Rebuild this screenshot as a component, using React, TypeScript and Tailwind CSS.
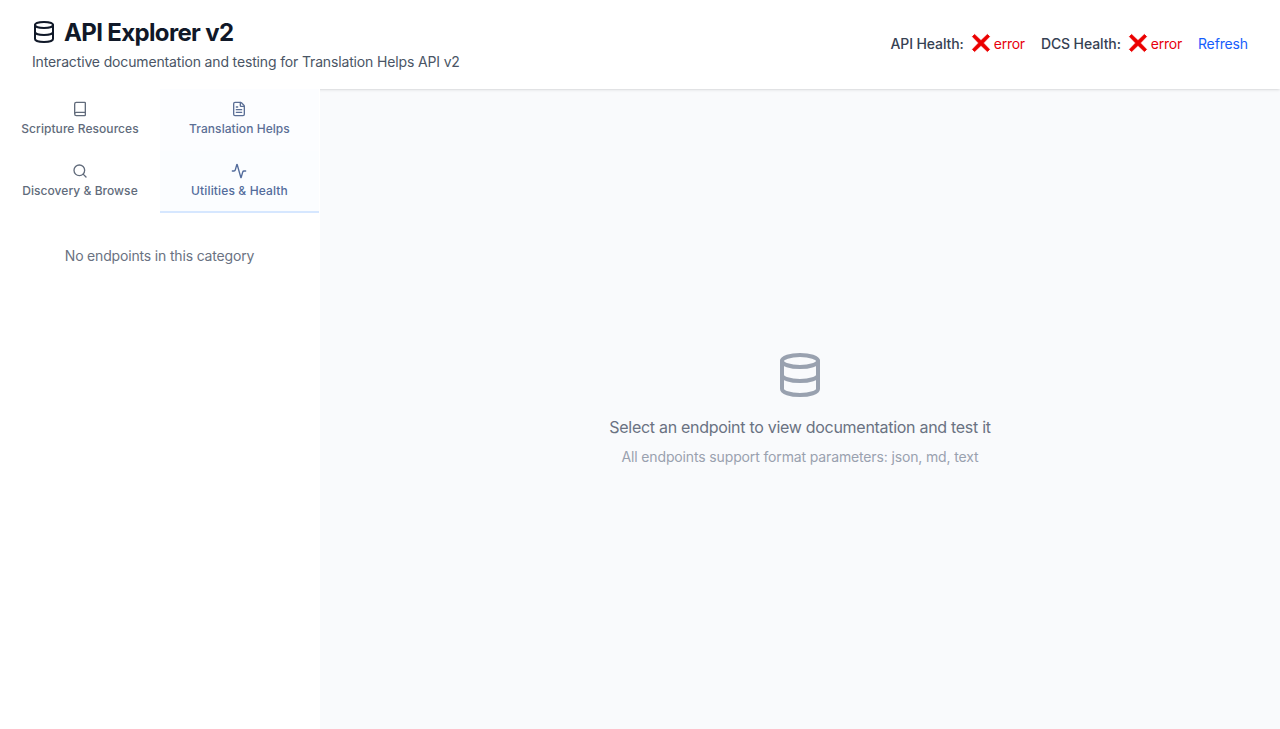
import { Activity, Book, Database, FileText, Search, type LucideIcon } from 'lucide-react';

type Category = { label: string; icon: LucideIcon; className: string; iconClassName: string };

const categories: Category[] = [
  {
    label: 'Scripture Resources',
    icon: Book,
    className: 'border-transparent text-[#616b7b] tracking-[0.06px]',
    iconClassName: 'size-4',
  },
  {
    label: 'Translation Helps',
    icon: FileText,
    className: 'border-transparent bg-[#fcfdff] text-[#5b6f96] tracking-[0.06px]',
    iconClassName: 'mr-px size-4',
  },
  {
    label: 'Discovery & Browse',
    icon: Search,
    className: 'border-transparent text-[#616b7b] tracking-[0.05px]',
    iconClassName: 'size-4',
  },
  {
    label: 'Utilities & Health',
    icon: Activity,
    className: 'border-[#d6e7ff] bg-[#fbfdff] text-[#536c9c] tracking-[0.14px]',
    iconClassName: 'mr-px size-4',
  },
];

function Cross() {
  return (
    <svg className="-mt-0.5 size-5" viewBox="0 0 20 20">
      <path
        d="M3.6 1.4 10 7.6 16.4 1.4 18.6 3.6 12.4 10 18.6 16.4 16.4 18.6 10 12.4 3.6 18.6 1.4 16.4 7.6 10 1.4 3.6Z"
        fill="#eb0000"
        stroke="#eb0000"
        strokeWidth="0.8"
        strokeLinejoin="round"
      />
    </svg>
  );
}

function Health({ label }: { label: string }) {
  return (
    <div className="flex items-center">
      <span className="font-medium tracking-[-0.1px] text-[#364153]">{label}</span>
      <span className="ml-[7px] flex items-center gap-[3px] tracking-[-0.25px] text-[#e7000b]">
        <Cross />
        error
      </span>
    </div>
  );
}

export default function App() {
  return (
    <div className="flex h-screen flex-col bg-[#f9fafc] font-['Inter',sans-serif]">
      <header className="flex h-[89px] shrink-0 items-center justify-between bg-white px-8 pb-px shadow-sm">
        <div>
          <h1 className="flex h-8 items-center gap-2 text-2xl font-bold tracking-[-0.65px] text-[#101828]">
            <Database className="size-6" />
            <span className="pt-0.5">API Explorer v2</span>
          </h1>
          <p className="mt-1 text-sm tracking-[-0.15px] text-[#4a5565]">
            Interactive documentation and testing for Translation Helps API v2
          </p>
        </div>
        <div className="flex items-center gap-4 text-sm">
          <Health label="API Health:" />
          <Health label="DCS Health:" />
          <button className="tracking-[-0.14px] text-[#155dfc]">Refresh</button>
        </div>
      </header>
      <div className="flex flex-1">
        <aside className="w-80 border-r border-white bg-white">
          <nav className="grid grid-cols-[160px_159px]">
            {categories.map(({ label, icon: Icon, className, iconClassName }) => (
              <button
                key={label}
                className={'flex h-[62px] flex-col items-center gap-1 border-b-2 pt-3 text-xs font-medium ' + className}
              >
                <Icon className={iconClassName} />
                {label}
              </button>
            ))}
          </nav>
          <p className="mt-[33px] text-center text-sm tracking-[-0.17px] text-[#6a7282]">No endpoints in this category</p>
        </aside>
        <main className="flex flex-1 flex-col items-center justify-center text-center">
          <Database className="mb-4 size-12 text-[#99a1af]" />
          <p className="text-base tracking-[-0.29px] text-[#6a7282]">Select an endpoint to view documentation and test it</p>
          <p className="mt-2 text-sm tracking-[-0.14px] text-[#99a1af]">All endpoints support format parameters: json, md, text</p>
        </main>
      </div>
    </div>
  );
}
